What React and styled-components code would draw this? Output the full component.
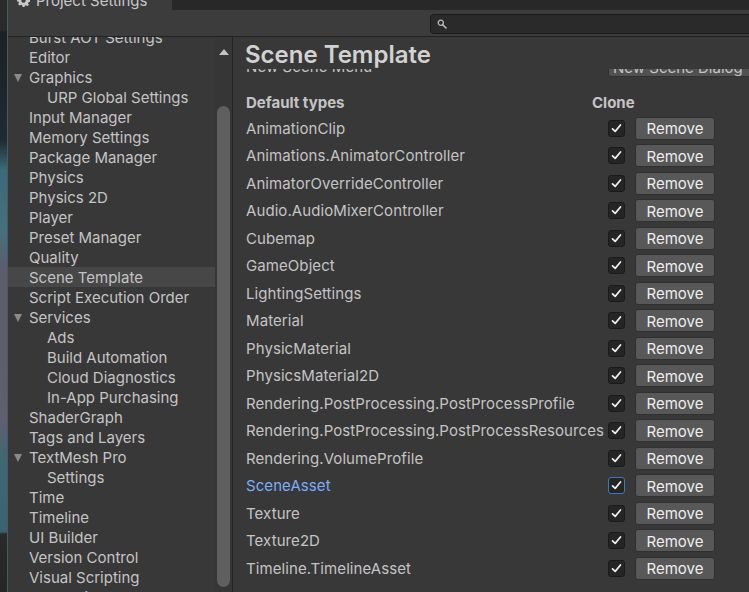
import React from "react";
import styled, { createGlobalStyle } from "styled-components";

const GlobalStyle = createGlobalStyle`
  html, body { margin: 0; padding: 0; background: #1e1e1e; overflow: hidden; }
  * { box-sizing: border-box; }
`;

const FONT = `Inter, "Noto Sans", "Liberation Sans", sans-serif`;

const Screen = styled.div`
  display: flex;
  width: 749px;
  height: 592px;
  font-family: ${FONT};
  font-size: 15px;
  color: #c4c4c4;
  overflow: hidden;
`;

const SceneStrip = styled.div`
  width: 8px;
  flex: none;
  border-right: 1px solid #4b5a60;
  background: linear-gradient(
    to bottom,
    #2a2a2a 0px, #2a2a2a 30px,
    #1c2126 32px, #1f2a31 140px,
    #3b6a78 170px, #47707e 230px,
    #5c5c6c 270px, #5f5f70 420px,
    #3f6774 460px, #3a6271 532px,
    #2a2a2a 534px, #262626 592px
  );
`;

const Window = styled.div`
  flex: 1;
  display: flex;
  flex-direction: column;
  background: #383838;
  min-width: 0;
`;

const TitleBar = styled.div`
  height: 10px;
  flex: none;
  display: flex;
  background: #282828;
  overflow: hidden;
`;

const Tab = styled.div`
  width: 164px;
  background: #3c3c3c;
  display: flex;
  align-items: center;
  gap: 6px;
  padding-left: 9px;
  margin-top: -10px;
  height: 20px;
  font-size: 15px;
  color: #c8c8c8;
`;

const Toolbar = styled.div`
  height: 27px;
  flex: none;
  display: flex;
  align-items: center;
  background: #3c3c3c;
  border-bottom: 1px solid #232323;
  padding-top: 1px;
`;

const SearchField = styled.div`
  margin-left: auto;
  margin-right: -4px;
  width: 323px;
  height: 20px;
  background: #2a2a2a;
  border: 1px solid #1b1b1b;
  border-radius: 4px;
  display: flex;
  align-items: center;
  padding-left: 6px;
`;

const Body = styled.div`
  flex: 1;
  display: flex;
  min-height: 0;
`;

const Sidebar = styled.div`
  width: 225px;
  flex: none;
  display: flex;
  border-right: 1px solid #232323;
`;

const NavList = styled.div`
  width: 207px;
  overflow: hidden;
`;

const NavInner = styled.div`
  margin-top: -10px;
`;

const NavItem = styled.div`
  height: 20px;
  display: flex;
  align-items: center;
  padding-left: ${(p) => (p.$level === 2 ? 39 : 21)}px;
  position: relative;
  white-space: nowrap;
  background: ${(p) => (p.$selected ? "#474747" : "transparent")};
  color: #c4c4c4;
`;

const Arrow = styled.span`
  position: absolute;
  left: 6px;
  top: 7px;
  width: 0;
  height: 0;
  border-left: 4.5px solid transparent;
  border-right: 4.5px solid transparent;
  border-top: 8px solid #8a8a8a;
`;

const Scrollbar = styled.div`
  width: 17px;
  flex: none;
  display: flex;
  flex-direction: column;
  align-items: center;
  background: #363636;
  padding-top: 12px;
  padding-bottom: 5px;
`;

const UpArrow = styled.span`
  width: 0;
  height: 0;
  border-left: 5px solid transparent;
  border-right: 5px solid transparent;
  border-bottom: 6px solid #c2c2c2;
`;

const Thumb = styled.div`
  margin-top: 51px;
  flex: 1;
  width: 13px;
  border-radius: 7px;
  background: #5f5f5f;
`;

const Content = styled.div`
  flex: 1;
  display: flex;
  flex-direction: column;
  min-width: 0;
`;

const Title = styled.div`
  height: 32px;
  flex: none;
  padding-left: 12px;
  display: flex;
  align-items: center;
  font-size: 24px;
  font-weight: 600;
  color: #d2d2d2;
  padding-top: 2px;
`;

const Scroller = styled.div`
  flex: 1;
  overflow: hidden;
  padding-left: 13px;
`;

const FieldRow = styled.div`
  margin-top: -14px;
  height: 22px;
  display: flex;
  align-items: center;
  white-space: nowrap;
`;

const Dropdown = styled.div`
  flex: none;
  width: 160px;
  height: 20px;
  background: #515151;
  border: 1px solid #303030;
  border-radius: 3px;
  padding-left: 4px;
  display: flex;
  align-items: center;
  color: #c4c4c4;
  margin-top: 2px;
`;

const HeaderRow = styled.div`
  margin-top: 14px;
  height: 23.5px;
  display: flex;
  align-items: center;
  font-weight: 700;
  color: #c4c4c4;
`;

const HeaderLabel = styled.div`
  width: ${(p) => p.$w}px;
  flex: none;
`;

const Row = styled.div`
  height: 27.5px;
  display: flex;
  align-items: center;
  white-space: nowrap;
`;

const Label = styled.div`
  width: 362px;
  flex: none;
  overflow: hidden;
  letter-spacing: 0.08px;
  color: ${(p) => (p.$focused ? "#7baefa" : "#c4c4c4")};
`;

const Check = styled.div`
  width: 17px;
  height: 17px;
  flex: none;
  border-radius: 3px;
  background: #252525;
  border: 1px solid ${(p) => (p.$focused ? "#3a79bb" : "#1a1a1a")};
  display: flex;
  align-items: center;
  justify-content: center;
`;

const RemoveButton = styled.div`
  margin-left: 10px;
  width: 80px;
  height: 23px;
  flex: none;
  background: #585858;
  border: 1px solid #303030;
  border-radius: 3px;
  display: flex;
  align-items: center;
  justify-content: center;
  color: #eeeeee;
  padding-top: 1px;
`;

const nav = [
  { t: "Burst AOT Settings" },
  { t: "Editor" },
  { t: "Graphics", arrow: true },
  { t: "URP Global Settings", l: 2 },
  { t: "Input Manager" },
  { t: "Memory Settings" },
  { t: "Package Manager" },
  { t: "Physics" },
  { t: "Physics 2D" },
  { t: "Player" },
  { t: "Preset Manager" },
  { t: "Quality" },
  { t: "Scene Template", sel: true },
  { t: "Script Execution Order" },
  { t: "Services", arrow: true },
  { t: "Ads", l: 2 },
  { t: "Build Automation", l: 2 },
  { t: "Cloud Diagnostics", l: 2 },
  { t: "In-App Purchasing", l: 2 },
  { t: "ShaderGraph" },
  { t: "Tags and Layers" },
  { t: "TextMesh Pro", arrow: true },
  { t: "Settings", l: 2 },
  { t: "Time" },
  { t: "Timeline" },
  { t: "UI Builder" },
  { t: "Version Control" },
  { t: "Visual Scripting" },
  { t: "XR Plugin Management" },
];

const types = [
  "AnimationClip",
  "Animations.AnimatorController",
  "AnimatorOverrideController",
  "Audio.AudioMixerController",
  "Cubemap",
  "GameObject",
  "LightingSettings",
  "Material",
  "PhysicMaterial",
  "PhysicsMaterial2D",
  "Rendering.PostProcessing.PostProcessProfile",
  "Rendering.PostProcessing.PostProcessResources",
  "Rendering.VolumeProfile",
  "SceneAsset",
  "Texture",
  "Texture2D",
  "Timeline.TimelineAsset",
];

const Gear = () => (
  <svg width="13" height="13" viewBox="0 0 16 16">
    <path
      fill="#c8c8c8"
      d="M6.8 0h2.4l.4 2.1c.5.2 1 .4 1.4.7l1.9-1 1.7 1.7-1 1.9c.3.4.5.9.7 1.4l2.1.4v2.4l-2.1.4c-.2.5-.4 1-.7 1.4l1 1.9-1.7 1.7-1.9-1c-.4.3-.9.5-1.4.7L9.2 16H6.8l-.4-2.1c-.5-.2-1-.4-1.4-.7l-1.9 1-1.7-1.7 1-1.9c-.3-.4-.5-.9-.7-1.4L0 9.2V6.8l2.1-.4c.2-.5.4-1 .7-1.4l-1-1.9 1.7-1.7 1.9 1c.4-.3.9-.5 1.4-.7L6.8 0zM8 5.3a2.7 2.7 0 100 5.4 2.7 2.7 0 000-5.4z"
    />
  </svg>
);

const SearchIcon = () => (
  <svg width="10" height="10" viewBox="0 0 10 10">
    <circle cx="3.8" cy="3.8" r="2.6" fill="none" stroke="#bdbdbd" strokeWidth="1.3" />
    <line x1="5.7" y1="5.7" x2="9" y2="9" stroke="#bdbdbd" strokeWidth="1.6" strokeLinecap="round" />
  </svg>
);

const CheckMark = () => (
  <svg width="11" height="11" viewBox="0 0 11 11">
    <polyline points="1.5,5.8 4.2,8.4 9.5,2" fill="none" stroke="#f0f0f0" strokeWidth="1.7" strokeLinejoin="round" strokeLinecap="round" />
  </svg>
);

export default function App() {
  return (
    <>
      <GlobalStyle />
      <Screen>
        <SceneStrip />
        <Window>
          <TitleBar>
            <Tab>
              <Gear />
              <span>Project Settings</span>
            </Tab>
          </TitleBar>
          <Toolbar>
            <SearchField>
              <SearchIcon />
            </SearchField>
          </Toolbar>
          <Body>
            <Sidebar>
              <NavList>
                <NavInner>
                  {nav.map((n) => (
                    <NavItem key={n.t} $level={n.l || 1} $selected={n.sel}>
                      {n.arrow && <Arrow />}
                      {n.t}
                    </NavItem>
                  ))}
                </NavInner>
              </NavList>
              <Scrollbar>
                <UpArrow />
                <Thumb />
              </Scrollbar>
            </Sidebar>
            <Content>
              <Title>Scene Template</Title>
              <Scroller>
                <FieldRow>
                  <Label>New Scene Menu</Label>
                  <Dropdown>New Scene Dialog</Dropdown>
                </FieldRow>
                <HeaderRow>
                  <HeaderLabel $w={346}>Default types</HeaderLabel>
                  <HeaderLabel $w={60}>Clone</HeaderLabel>
                </HeaderRow>
                {types.map((t) => {
                  const focused = t === "SceneAsset";
                  return (
                    <Row key={t}>
                      <Label $focused={focused}>{t}</Label>
                      <Check $focused={focused}>
                        <CheckMark />
                      </Check>
                      <RemoveButton>Remove</RemoveButton>
                    </Row>
                  );
                })}
              </Scroller>
            </Content>
          </Body>
        </Window>
      </Screen>
    </>
  );
}
